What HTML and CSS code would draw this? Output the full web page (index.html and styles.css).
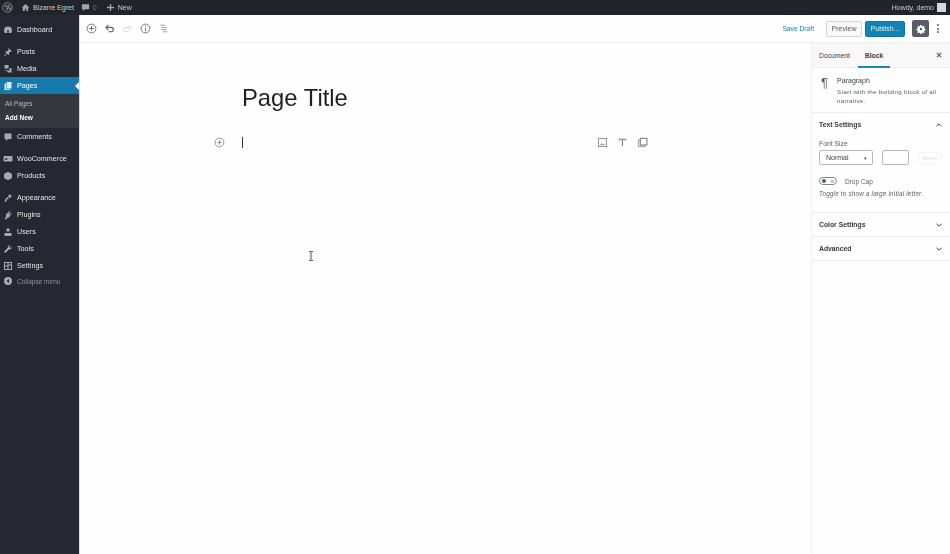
FILE: index.html
```html
<!DOCTYPE html>
<html lang="en">
<head>
    <meta charset="UTF-8">
    <title>Add New Page</title>
    <link rel="stylesheet" href="styles.css">
</head>
<body>
    <!-- Admin bar -->
    <header class="adminbar">
        <div class="adminbar-left">
            <svg class="wp-logo" viewBox="0 0 20 20"><circle cx="10" cy="10" r="8.6" fill="none" stroke="#a0a5aa" stroke-width="1.4"/><path d="M5 6.500h4M11 6.500h4M6.300 6.500l3 8.500 1.600-4.600-1.200-3.900M11.400 6.500l3 8.500 2-5.500" fill="none" stroke="#a0a5aa" stroke-width="1.300"/></svg>
            <span class="bar-item"><svg class="bar-icon" viewBox="0 0 20 20"><path d="M10 2 1.500 10H4v8h4.500v-5h3v5H16v-8h2.500z" fill="#a0a5aa"/></svg>Bizarre Egret</span>
            <span class="bar-item dim"><svg class="bar-icon" viewBox="0 0 20 20"><path d="M2 3h16v11H9l-4 4v-4H2z" fill="#a0a5aa"/></svg>0</span>
            <span class="bar-item"><svg class="bar-icon" viewBox="0 0 20 20"><path d="M8.500 2h3v6.500H18v3h-6.500V18h-3v-6.500H2v-3h6.500z" fill="#a0a5aa"/></svg>New</span>
        </div>
        <div class="adminbar-right">Howdy, demo <span class="avatar"></span></div>
    </header>

    <div class="layout">
        <!-- Left menu -->
        <nav class="sidemenu">
            <a class="menu-item"><svg viewBox="0 0 20 20"><path d="M10 3a8 8 0 0 0-8 8c0 2 .7 3.800 2 5h12c1.300-1.200 2-3 2-5a8 8 0 0 0-8-8zm0 5 1.500 4.500a1.800 1.800 0 1 1-3 0z"/></svg>Dashboard</a>
            <div class="menu-gap"></div>
            <a class="menu-item"><svg viewBox="0 0 20 20"><path d="m11 2 7 7-2 1-1-1-3 3c.5 2 0 3.500-1 4.500l-3-3-5 5-1-1 5-5-3-3c1-1 2.500-1.500 4.500-1l3-3-1-1z"/></svg>Posts</a>
            <a class="menu-item"><svg viewBox="0 0 20 20"><path d="M3 2h8v7H3zm1 9 1 3h3l1 3h8V8h-4v5H6z"/></svg>Media</a>
            <a class="menu-item current"><svg viewBox="0 0 20 20"><path d="M7 2h10v13H7z"/><path d="M3 5h3v11h8v2H3z"/></svg>Pages</a>
            <div class="submenu">
                <a class="sub-item">All Pages</a>
                <a class="sub-item active">Add New</a>
            </div>
            <a class="menu-item"><svg viewBox="0 0 20 20"><path d="M3 3h14v11H10l-4 4v-4H3z"/></svg>Comments</a>
            <div class="menu-gap"></div>
            <a class="menu-item"><svg viewBox="0 0 20 20"><rect x="1" y="4" width="18" height="11" rx="2"/><path d="M4 8l1 4 1.500-3 1 3 1-4M12 10h.1M15 10h.1" stroke="#23282d" stroke-width="1.200" fill="none"/></svg>WooCommerce</a>
            <a class="menu-item"><svg viewBox="0 0 20 20"><path d="M10 1.500 18 6v8l-8 4.500L2 14V6z"/></svg>Products</a>
            <div class="menu-gap"></div>
            <a class="menu-item"><svg viewBox="0 0 20 20"><path d="m13 2 5 5-5 3-3-3zM9 8l3 3-4 2-2 5-3-1 2-5z"/></svg>Appearance</a>
            <a class="menu-item"><svg viewBox="0 0 20 20"><path d="M13 2l1.500 1-3 4 2 1.500 3-3.500 1 1.500-4 5.500-1 3H9l-1.500 3.500H3L6 13V9z"/></svg>Plugins</a>
            <a class="menu-item"><svg viewBox="0 0 20 20"><circle cx="10" cy="6" r="3.500"/><path d="M3 12h14v6H3z"/></svg>Users</a>
            <a class="menu-item"><svg viewBox="0 0 20 20"><path d="M17 5.500 14 8l-2-2 2.500-3C12 2 9 4 9.500 7.500L2 15.500 4.500 18l8-7.500C16 11 18 8 17 5.500z"/></svg>Tools</a>
            <a class="menu-item"><svg viewBox="0 0 20 20"><path d="M2 2h16v16H2zm2 2v5h5V4zm7 0v3h5V4zm0 5v7h5V9zm-7 2v5h5v-5z" fill-rule="evenodd"/></svg>Settings</a>
            <a class="menu-item collapse"><svg viewBox="0 0 20 20"><path d="M10 2a8 8 0 1 0 0 16 8 8 0 0 0 0-16zm2 4v8L7 10z" fill-rule="evenodd"/></svg>Collapse menu</a>
        </nav>

        <main class="editor">
            <!-- Top toolbar -->
            <div class="toolbar">
                <div class="tools">
                    <svg class="tool" viewBox="0 0 20 20"><circle cx="10" cy="10" r="8" class="line"/><path d="M10 5.500v9M5.500 10h9" class="line"/></svg>
                    <svg class="tool" viewBox="0 0 20 20"><path d="M5 8h8a4 4 0 0 1 0 8H8" class="line thick"/><path d="M8 3.500 3.500 8 8 12.500" class="line thick"/></svg>
                    <svg class="tool faded" viewBox="0 0 20 20"><path d="M15 8H7a4 4 0 0 0 0 8h5" class="line"/><path d="M12 3.500 16.500 8 12 12.500" class="line"/></svg>
                    <svg class="tool" viewBox="0 0 20 20"><circle cx="10" cy="10" r="8" class="line"/><path d="M10 9v6M10 5v2.200" class="line"/></svg>
                    <svg class="tool light" viewBox="0 0 20 20"><path d="M3 4h10M6 8h10M6 12h10M9 16h8" class="line"/></svg>
                </div>
                <div class="actions">
                    <span class="save-draft">Save Draft</span>
                    <button class="btn btn-preview">Preview</button>
                    <button class="btn btn-publish">Publish...</button>
                    <span class="settings-btn"><svg viewBox="0 0 20 20"><path d="M8.500 2h3l.4 2.200 1.500.7 1.900-1.200 2 2.100-1.200 1.800.7 1.600 2.200.4v3l-2.200.4-.7 1.500 1.200 1.900-2 2-1.900-1.200-1.500.7-.4 2.100h-3l-.4-2.100-1.500-.7-1.900 1.200-2-2 1.200-1.900-.7-1.500-2.200-.4v-3l2.200-.4.7-1.600-1.200-1.800 2-2.100 1.900 1.200 1.500-.7zM10 7.500a2.500 2.500 0 1 0 0 5 2.500 2.500 0 0 0 0-5z" fill="#fff" fill-rule="evenodd"/></svg></span>
                    <span class="more"><i></i><i></i><i></i></span>
                </div>
            </div>

            <div class="editor-body">
                <!-- Writing area -->
                <section class="canvas">
                    <h1 class="page-title">Page Title</h1>
                    <div class="block-row">
                        <svg class="block-add" viewBox="0 0 20 20"><circle cx="10" cy="10" r="8" class="line"/><path d="M10 6v8M6 10h8" class="line"/></svg>
                        <span class="caret"></span>
                        <div class="block-tools">
                            <svg viewBox="0 0 20 20"><rect x="2.500" y="2.500" width="15" height="15" class="line"/><path d="M5 15l3-4 2 2 2-1 3 3z" fill="#8f8a8e"/></svg>
                            <svg viewBox="0 0 20 20"><path d="M4.500 6.500V4h11v2.500M10 4v12.500" class="line thick"/></svg>
                            <svg viewBox="0 0 20 20"><rect x="6" y="2.500" width="12" height="12" class="line thick"/><path d="M6 5.500H2.500v12h12V14.500" class="line"/></svg>
                        </div>
                    </div>
                    <svg class="ibeam" viewBox="0 0 6 10"><path d="M1 .5h1.500l.5.500.5-.5H5M3 1v8M1 9.500h1.500L3 9l.5.500H5" fill="none" stroke="#222" stroke-width=".8"/></svg>
                </section>

                <!-- Settings sidebar -->
                <aside class="panel">
                    <div class="panel-tabs">
                        <span class="tab">Document</span>
                        <span class="tab tab-active">Block</span>
                        <svg class="panel-close" viewBox="0 0 10 10"><path d="M1.500 1.500l7 7M8.500 1.500l-7 7" class="line thick"/></svg>
                    </div>
                    <div class="block-card">
                        <span class="pilcrow">¶</span>
                        <div>
                            <div class="block-name">Paragraph</div>
                            <p class="block-desc">Start with the building block of all narrative.</p>
                        </div>
                    </div>
                    <div class="section text-settings">
                        <div class="section-head">Text Settings <svg viewBox="0 0 10 6"><path d="M1 5l4-4 4 4" class="chev"/></svg></div>
                        <div class="field-label">Font Size</div>
                        <div class="font-row">
                            <span class="select">Normal <b>▾</b></span>
                            <span class="num-input"></span>
                            <span class="reset">Reset</span>
                        </div>
                        <div class="toggle-row">
                            <span class="toggle"><i></i><u></u></span>
                            <span>Drop Cap</span>
                        </div>
                        <p class="help">Toggle to show a large initial letter.</p>
                    </div>
                    <div class="section section-closed">
                        <div class="section-head">Color Settings <svg viewBox="0 0 10 6"><path d="M1 1l4 4 4-4" class="chev"/></svg></div>
                    </div>
                    <div class="section section-closed">
                        <div class="section-head">Advanced <svg viewBox="0 0 10 6"><path d="M1 1l4 4 4-4" class="chev"/></svg></div>
                    </div>
                </aside>
            </div>
        </main>
    </div>
</body>
</html>
```

FILE: styles.css
```css
* {
    box-sizing: border-box;
}

html, body {
    height: 100%;
}

body {
    margin: 0;
    overflow: hidden;
    background-color: #fffefe;
    color: #23282d;
    font-family: "Liberation Sans", Arial, sans-serif;
    font-size: 7px;
    display: flex;
    flex-direction: column;
    opacity: .99; /* gris en el texto, sin bordes de color */
}

/* Admin bar */
.adminbar {
    height: 15px;
    flex: none;
    background-color: #1f2229;
    color: #c9cbcf;
    display: flex;
    justify-content: space-between;
    align-items: center;
    font-size: 7px;
}

.adminbar-left {
    display: flex;
    align-items: center;
    padding-left: 2px;
}

.wp-logo {
    width: 11px;
    height: 11px;
    margin-right: 8px;
}

.bar-item {
    display: flex;
    align-items: center;
    gap: 3px;
    margin-right: 7px;
}

.bar-item.dim {
    color: #6f7479;
    margin-right: 9px;
}

.bar-icon {
    width: 9px;
    height: 9px;
}

.adminbar-right {
    display: flex;
    align-items: center;
    gap: 3px;
    padding-right: 4px;
}

.avatar {
    width: 9px;
    height: 9px;
    background-color: #d9d9d9;
}

.layout {
    flex: 1;
    display: flex;
    min-height: 0;
}

/* Left menu */
.sidemenu {
    width: 80px;
    flex: none;
    background-color: #23262e;
    padding-top: 6px;
    border-right: 1px solid #d8d8d8;
}

.menu-item {
    height: 17px;
    display: flex;
    align-items: center;
    gap: 4px;
    padding-left: 3px;
    color: #e3e4e6;
    font-size: 7.200px;
    position: relative;
}

.menu-item svg {
    width: 10px;
    height: 10px;
    fill: #a5a9ad;
    flex: none;
}

.menu-gap {
    height: 5px;
}

.menu-item.current {
    background-color: #1479ac;
    color: #fff;
}

.menu-item.current svg {
    fill: #dfeaf0;
}

.menu-item.current::after {
    content: "";
    position: absolute;
    right: 0;
    top: 5px;
    border: 4px solid transparent;
    border-right-color: #fff;
    border-left-width: 0;
}

.menu-item.collapse {
    height: 14px;
    color: #8f9398;
    font-size: 6.500px;
}

.submenu {
    background-color: #32363b;
    padding: 3px 0 3px;
}

.sub-item {
    display: block;
    height: 14px;
    line-height: 14px;
    padding-left: 5px;
    color: #b4b7ba;
    font-size: 6.500px;
}

.sub-item.active {
    color: #fff;
    font-weight: bold;
}

/* Editor */
.editor {
    flex: 1;
    display: flex;
    flex-direction: column;
    min-width: 0;
}

.toolbar {
    height: 28px;
    flex: none;
    display: flex;
    justify-content: space-between;
    align-items: center;
    border-bottom: 1px solid #f0f0f0;
    padding: 0 11px 0 6px;
}

.tools {
    display: flex;
    align-items: center;
    gap: 7px;
}

.tool {
    width: 11px;
    height: 11px;
}

.tool.faded {
    opacity: .3;
}

.tool.light {
    opacity: .7;
}

.line {
    fill: none;
    stroke: #555d66;
    stroke-width: 1.500;
}

.line.thick {
    stroke-width: 2;
}

.actions {
    display: flex;
    align-items: center;
}

.save-draft {
    color: #1a80ae;
    font-size: 6.700px;
    margin-right: 12px;
}

.btn {
    height: 16px;
    padding: 0;
    border-radius: 2px;
    font-family: inherit;
    font-size: 7px;
}

.btn-preview {
    width: 36px;
    background-color: #f9f9f9;
    border: 1px solid #d4d4d4;
    color: #555d66;
    margin-right: 3px;
}

.btn-publish {
    width: 40px;
    background-color: #0f82b5;
    border: 1px solid #0c74a2;
    color: #e6f1f6;
    margin-right: 7px;
}

.settings-btn {
    width: 17px;
    height: 17px;
    background-color: #555d66;
    border-radius: 2px;
    display: flex;
    align-items: center;
    justify-content: center;
    margin-right: 8px;
}

.settings-btn svg {
    width: 10px;
    height: 10px;
}

.more {
    display: flex;
    flex-direction: column;
    gap: 1.500px;
}

.more i {
    width: 2px;
    height: 2px;
    border-radius: 50%;
    background-color: #555d66;
}

.editor-body {
    flex: 1;
    display: flex;
    min-height: 0;
}

.canvas {
    flex: 1;
    position: relative;
    padding: 40px 0 0 133px;
}

.page-title {
    margin: 0 0 22px 29px;
    font-size: 23.800px;
    font-weight: normal;
    line-height: 30px;
    color: #1d1d20;
}

.block-row {
    display: flex;
    align-items: center;
    height: 14px;
    position: relative;
}

.block-add {
    width: 11px;
    height: 11px;
    margin-left: 1px;
    margin-right: 17px;
    opacity: .8;
}

.caret {
    width: 1px;
    height: 11px;
    background-color: #333;
}

.block-tools {
    display: flex;
    gap: 9px;
    margin-left: 354px;
}

.block-tools svg {
    width: 11px;
    height: 11px;
    opacity: .8;
}

.ibeam {
    position: absolute;
    left: 228px;
    top: 208px;
    width: 6px;
    height: 10px;
}

/* Settings sidebar */
.panel {
    width: 139px;
    flex: none;
    border-left: 1px solid #eeeeee;
}

.panel-tabs {
    height: 25px;
    display: flex;
    align-items: center;
    background-color: #f8f8f8;
    border-bottom: 1px solid #eeeeee;
    padding-left: 7px;
    position: relative;
}

.tab {
    color: #3a4046;
    font-size: 6.800px;
    margin-right: 8px;
}

.tab-active {
    font-weight: bold;
    width: 32px;
    height: 25px;
    line-height: 25px;
    text-align: center;
    border-bottom: 2px solid #1b86b6;
}

.panel-close {
    position: absolute;
    right: 8px;
    top: 9px;
    width: 6px;
    height: 6px;
}

.block-card {
    display: flex;
    gap: 7px;
    padding: 8px 6px 6px 9px;
    height: 45px;
    border-bottom: 1px solid #eeeeee;
}

.pilcrow {
    font-size: 13px;
    line-height: 13px;
    width: 11px;
    color: #555d66;
}

.block-name {
    font-size: 7px;
    color: #3a4046;
    margin: 1px 0 3px;
}

.block-desc {
    margin: 0;
    font-size: 6.200px;
    line-height: 9px;
    letter-spacing: .25px;
    color: #555d66;
}

.section {
    border-bottom: 1px solid #eeeeee;
    padding: 0 8px 0 7px;
}

.section-head {
    height: 23px;
    display: flex;
    justify-content: space-between;
    align-items: center;
    font-size: 6.800px;
    font-weight: bold;
    color: #33383e;
}

.section-head svg {
    width: 6px;
    height: 4px;
}

.chev {
    fill: none;
    stroke: #333;
    stroke-width: 1.600;
}

.text-settings {
    height: 100px;
}

.field-label {
    margin-top: 4px;
    font-size: 6.800px;
    color: #555d66;
}

.font-row {
    display: flex;
    align-items: center;
    margin-top: 3px;
    height: 15px;
}

.select {
    width: 54px;
    height: 15px;
    border: 1px solid #b5b9bd;
    border-radius: 2px;
    display: flex;
    justify-content: space-between;
    align-items: center;
    padding: 0 5px 0 6px;
    color: #444;
    font-size: 7px;
}

.select b {
    font-size: 5px;
    font-weight: normal;
}

.num-input {
    width: 27px;
    height: 15px;
    border: 1px solid #b5b9bd;
    border-radius: 2px;
    margin-left: 9px;
}

.reset {
    width: 23px;
    height: 12px;
    margin-left: 9px;
    border: 1px solid #f3f3f3;
    border-radius: 2px;
    color: #dddddd;
    font-size: 5.500px;
    display: flex;
    align-items: center;
    justify-content: center;
}

.toggle-row {
    display: flex;
    align-items: center;
    gap: 8px;
    margin-top: 12px;
    font-size: 6.500px;
    color: #555d66;
}

.toggle {
    width: 18px;
    height: 8px;
    border: 1px solid #80868b;
    border-radius: 4px;
    display: flex;
    justify-content: space-between;
    align-items: center;
    padding: 0 2px;
}

.toggle i {
    width: 4px;
    height: 4px;
    border-radius: 50%;
    background-color: #555d66;
}

.toggle u {
    width: 3px;
    height: 3px;
    border-radius: 50%;
    border: 1px solid #888;
}

.help {
    margin: 5px 0 0;
    font-size: 6.300px;
    font-style: italic;
    letter-spacing: .2px;
    color: #555d66;
}
```
